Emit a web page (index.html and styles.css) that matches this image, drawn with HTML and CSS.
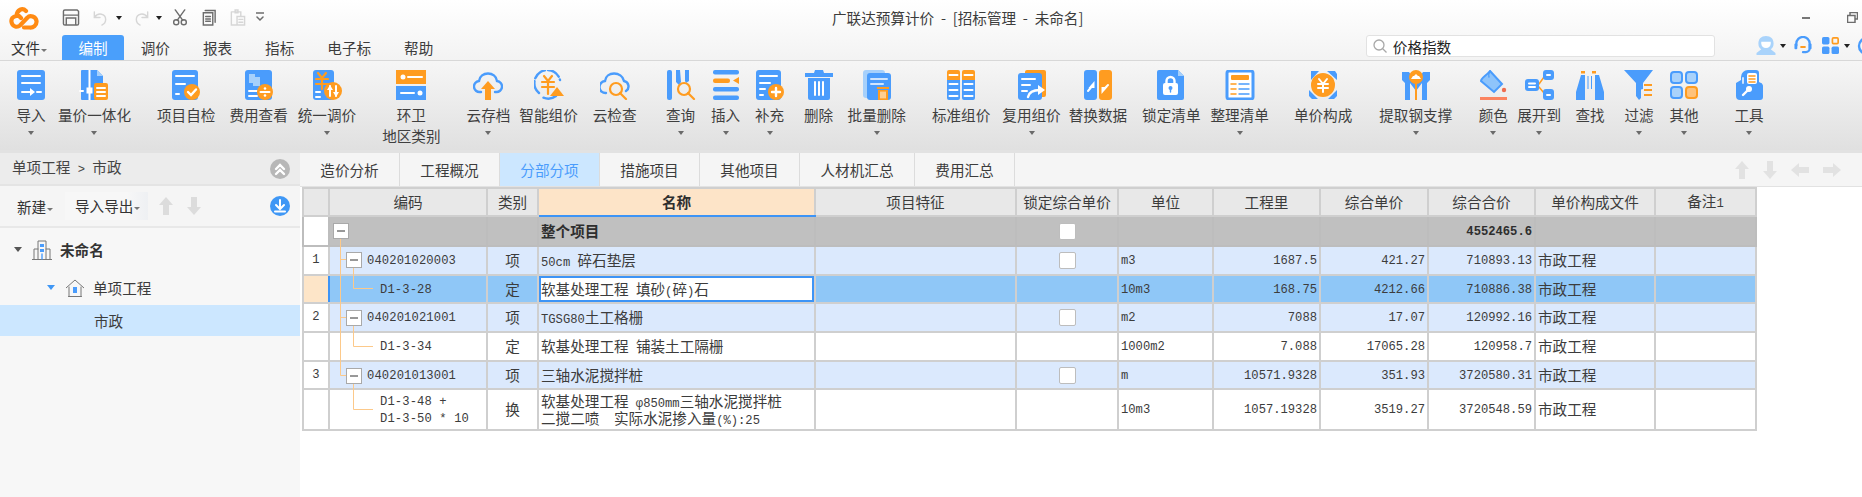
FILE: index.html
```html
<!DOCTYPE html>
<html lang="zh-CN">
<head>
<meta charset="utf-8">
<title>广联达预算计价</title>
<link rel="stylesheet" href="styles.css">
</head>
<body>
<div class="app">
  <header class="top">
    <div class="titlebar">
      <svg class="logo" viewBox="0 0 30 24"><path class="so" d="M17 5C13.500 1.500 8 3.500 7.500 10 3.500 10.500 2 13 2.500 16 3.200 20.500 8 22 11 19.500L18.500 11.500C21 8.500 27 10.500 27.500 15 28 19.500 24 22 20.500 21.500L15 21.500M12 12l-2-2"/></svg>
      <div class="quick">
        <svg class="q q-save" viewBox="0 0 18 18"><path class="sg" d="M2.500 1h13l1.500 1.500v13a1.500 1.500 0 0 1-1.500 1.500h-13A1.500 1.500 0 0 1 1 15.500v-13A1.500 1.500 0 0 1 2.500 1zM1 6.500h16M4 17v-7.500h10V17"/></svg>
        <svg class="q q-undo" viewBox="0 0 16 18"><path class="sl" d="M2 3v6h6M2 9c4-6 12-4 12 2 0 3-2 5-4 6"/></svg>
        <i class="drop d-undo"></i>
        <svg class="q q-redo" viewBox="0 0 16 18"><path class="sl" d="M14 3v6H8M14 9C10 3 2 5 2 11c0 3 2 5 4 6"/></svg>
        <i class="drop d-redo"></i>
        <svg class="q q-cut" viewBox="0 0 16 18"><path class="sg" d="M3 1l8 11M13 1L5 12"/><circle class="sg" cx="4" cy="14" r="2.700"/><circle class="sg" cx="12" cy="14" r="2.700"/></svg>
        <svg class="q q-copy" viewBox="0 0 16 18"><path class="sg" d="M4 1.500h10.500V14M2 4h10v13H2zM4.500 8h5M4.500 10.500h5M4.500 13h5"/></svg>
        <svg class="q q-paste" viewBox="0 0 17 18"><path class="sl" d="M2 3h10v5M6 1h3v3H6zM2 3v14h6M8 8h8v9H8zM10 11h4M10 14h4"/></svg>
        <svg class="q q-more" viewBox="0 0 8 12"><path class="sg" d="M0 1h8M1 5l3 3 3-3"/></svg>
      </div>
      <div class="app-title">广联达预算计价 - [招标管理 - 未命名]</div>
      <div class="win">
        <i class="win-min"></i>
        <svg class="win-res" viewBox="0 0 11 11"><path class="sg" d="M3 3V.5h7.500V7H8M.5 3.500H8V10.500H.5z"/></svg>
      </div>
    </div>
    <div class="menubar">
      <span class="file">文件<i class="caret-sm"></i></span>
      <nav class="menus">
        <span class="menu active">编制</span>
        <span class="menu">调价</span>
        <span class="menu">报表</span>
        <span class="menu">指标</span>
        <span class="menu">电子标</span>
        <span class="menu">帮助</span>
      </nav>
      <div class="search">
        <svg class="search-ic" viewBox="0 0 14 14"><circle cx="6" cy="6" r="5"/><path d="M9.500 9.500l4 4"/></svg>
        <span>价格指数</span>
      </div>
      <div class="tools">
        <svg class="t-helmet" viewBox="0 0 20 20"><path class="lb" d="M10 0c5 0 8 3 8 8 0 3-1 5-3 6l5 4v2H0v-2l5-4C3 13 2 11 2 8c0-5 3-8 8-8z"/><path class="w" d="M5 6h10v1.500c0 3-2 5-5 5s-5-2-5-5z"/></svg>
        <i class="drop"></i>
        <svg class="t-head" viewBox="0 0 18 20"><path class="sb" d="M2 10V8a7 7 0 0 1 14 0v5a4 4 0 0 1-4 4H9"/><rect class="b" x="0" y="8" width="3" height="6" rx="1"/><rect class="b" x="15" y="8" width="3" height="6" rx="1"/><rect class="o" x="6" y="10.500" width="6" height="2" rx="1"/></svg>
        <svg class="t-grid" viewBox="0 0 16 16"><rect class="b" width="7" height="7" rx="1.500"/><rect class="so2" x="9.800" y=".8" width="5.400" height="5.400" rx="1"/><rect class="b" y="9" width="7" height="7" rx="1.500"/><rect class="b" x="9" y="9" width="7" height="7" rx="1.500"/></svg>
        <i class="drop"></i>
        <svg class="t-circle" viewBox="0 0 10 20"><circle class="sb" cx="10" cy="10" r="8"/></svg>
      </div>
    </div>
  </header>

  <section class="ribbon">
    <div class="rb g16"><svg class="ri" viewBox="0 0 30 30"><rect class="b" x="1" width="28" height="30" rx="3"/><path class="sw" d="M6 6h18M6 13h18M6 22h10M21 22h4"/><path class="w" d="M14 18l5 4-5 4z"/></svg><span class="rl">导入</span><i class="caret"></i></div>
    <div class="rb g12"><svg class="ri" viewBox="0 0 30 30"><path class="b" d="M2 1a1 1 0 0 1 1-1h15l6 6v22a2 2 0 0 1-2 2H3a1 1 0 0 1-1-1z"/><path class="lb2" d="M18 0l6 6h-6z"/><path class="sw" d="M10.500 0v30M1 21h3"/><rect class="w" x="7.500" y="17.500" width="6" height="6"/><rect class="o" x="15" y="13" width="14" height="17" rx="2"/><path class="sw" d="M18 18h8M18 22h8M18 26h8"/></svg><span class="rl">量价一体化</span><i class="caret"></i></div>
    <div class="rb g26"><svg class="ri" viewBox="0 0 30 30"><rect class="b" x="1" width="26" height="30" rx="3"/><path class="sw" d="M5 6h18M5 14h9M5 24h3"/><circle class="o" cx="21" cy="22" r="8"/><path class="sw2" d="M17 22l3 3 5-5.500"/></svg><span class="rl">项目自检</span></div>
    <div class="rb g14"><svg class="ri" viewBox="0 0 30 30"><rect class="b" x="1" width="27" height="30" rx="3"/><rect class="lb2" x="5" y="4" width="6" height="9"/><rect class="lb2" x="9" y="7" width="7" height="9"/><path class="sw" d="M5 21h8M5 26h8"/><circle class="o" cx="21" cy="22" r="8"/><path class="sw" d="M16.500 22h9"/><circle class="w" cx="21" cy="18.500" r="1.300"/><circle class="w" cx="21" cy="25.500" r="1.300"/></svg><span class="rl">费用查看</span></div>
    <div class="rb g10"><svg class="ri" viewBox="0 0 30 30"><rect class="b" x="1" width="21" height="30" rx="3"/><path class="so3" d="M6 3l4 5 4-5M4 9h12M4 14h12M10 8v11"/><path class="sw" d="M4 22h4M4 27h4"/><circle class="o" cx="21" cy="21" r="9"/><path class="sw" d="M18 16v10M24 16v10"/><path class="w" d="M15 20l3-5 3 5zM21 22l3 5 3-5z"/></svg><span class="rl">统一调价</span><i class="caret"></i></div>
    <div class="rb g26"><svg class="ri ri-wide" viewBox="0 0 30 30"><rect class="o" width="30" height="14"/><rect class="b" y="16" width="30" height="14"/><circle class="w" cx="7" cy="7" r="2.500"/><path class="sw" d="M12 7h14M5 23h13"/><circle class="w" cx="24" cy="23" r="2.500"/></svg><span class="rl">环卫<br>地区类别</span></div>
    <div class="rb g26"><svg class="ri" viewBox="0 0 30 30"><path class="sb" d="M8 22H7a5.500 5.500 0 0 1-1-11c1-10 17-10 18 0a5.500 5.500 0 0 1-1 11h-1"/><path class="o" d="M15 11l7 8h-4v11h-6V19H8z"/></svg><span class="rl">云存档</span><i class="caret"></i></div>
    <div class="rb g9"><svg class="ri" viewBox="0 0 30 30"><path class="sb" stroke-dasharray="13 3" d="M5 23A13 13 0 1 1 26 10M22 26a13 13 0 0 1-14 1"/><path class="so3" d="M10 6l4 5 4-5M8 12h12M8 17h12M14 11v13"/><path class="o" d="M23 17l7 9H16z"/></svg><span class="rl">智能组价</span></div>
    <div class="rb g15"><svg class="ri" viewBox="0 0 30 30"><path class="sb" d="M6 23a5.500 5.500 0 0 1-1-12C6 1 22 1 24 11a5.500 5.500 0 0 1 2 10"/><circle class="so3" cx="16" cy="19" r="6"/><path class="so3" d="M20 23l6 6"/></svg><span class="rl">云检查</span></div>
    <div class="rb g29"><svg class="ri" viewBox="0 0 30 30"><rect class="b" x="1" width="5" height="30" rx="2"/><path class="b" d="M10 0h4l1 12-2 3-3-3zM19 0h4v11l-3 2-1-2z"/><circle class="so3" cx="18" cy="19" r="6"/><path class="so3" d="M22 23l6 6"/></svg><span class="rl">查询</span><i class="caret"></i></div>
    <div class="rb g15"><svg class="ri" viewBox="0 0 30 30"><rect class="b" x="2" width="26" height="4.500" rx="2"/><rect class="o" x="2" y="8.500" width="17" height="4.500" rx="2"/><path class="o" d="M28 7v7l-6-3.500z"/><rect class="b" x="2" y="17" width="26" height="4.500" rx="2"/><rect class="b" x="2" y="25.500" width="26" height="4.500" rx="2"/></svg><span class="rl">插入</span><i class="caret"></i></div>
    <div class="rb g14"><svg class="ri" viewBox="0 0 30 30"><rect class="b" x="1" width="25" height="30" rx="3"/><path class="sw" d="M5 6h17M5 13h10M5 19h5M5 25h3"/><circle class="o" cx="21" cy="22" r="8"/><path class="sw2" d="M17 22h8M21 18v8"/></svg><span class="rl">补充</span><i class="caret"></i></div>
    <div class="rb g19"><svg class="ri" viewBox="0 0 30 30"><path class="b" d="M11 0h8l1 3h9v4H1V3h9z"/><path class="b" d="M4 8h22v20a2 2 0 0 1-2 2H6a2 2 0 0 1-2-2z"/><path class="sw" d="M11 12v13M15 12v13M19 12v13"/></svg><span class="rl">删除</span></div>
    <div class="rb g14"><svg class="ri" viewBox="0 0 30 30"><rect class="lb2" x="1" width="22" height="28" rx="3"/><rect class="b" x="5" y="3" width="24" height="27" rx="3"/><path class="lw" d="M9 9h16M9 14h12"/><path class="o" d="M15 17h12v2h-12zM16 20h10v10H16z"/><path class="sw1" d="M19 22v6M21 22v6M23 22v6"/></svg><span class="rl">批量删除</span><i class="caret"></i></div>
    <div class="rb g26"><svg class="ri" viewBox="0 0 30 30"><path class="o" d="M3 0h9a2 2 0 0 1 2 2v8H1V2a2 2 0 0 1 2-2zM18 0h9a2 2 0 0 1 2 2v8H16V2a2 2 0 0 1 2-2z"/><path class="b" d="M1 10h13v18a2 2 0 0 1-2 2H3a2 2 0 0 1-2-2zM16 10h13v18a2 2 0 0 1-2 2h-9a2 2 0 0 1-2-2z"/><path class="sw" d="M3.500 5h8M18.500 5h8M3.500 14h8M18.500 14h8M3.500 20h8M18.500 20h8M3.500 26h8M18.500 26h8"/></svg><span class="rl">标准组价</span></div>
    <div class="rb g12"><svg class="ri" viewBox="0 0 30 30"><rect class="o" x="8" width="21" height="27" rx="2"/><rect class="b" x="1" y="3" width="24" height="27" rx="3"/><path class="sw" d="M5 9h13M5 15h8M5 21h5"/><path class="sw2" d="M11 27c1-5 6-7 12-7"/><path class="w" d="M21 15l7 5-7 5z"/></svg><span class="rl">复用组价</span><i class="caret"></i></div>
    <div class="rb g8"><svg class="ri" viewBox="0 0 30 30"><rect class="b" x="1" width="13" height="30" rx="3"/><rect class="o" x="16" width="13" height="30" rx="3"/><path class="sw" d="M5 21l5-6"/><path class="w" d="M11.500 11v7h-6z"/><path class="sw" d="M25 15l-5 5"/><path class="w" d="M18.500 24v-7h6z"/></svg><span class="rl">替换数据</span></div>
    <div class="rb g15"><svg class="ri" viewBox="0 0 30 30"><path class="b" d="M3 0h19l6 6v22a2 2 0 0 1-2 2H3a2 2 0 0 1-2-2V2a2 2 0 0 1 2-2z"/><path class="lb2" d="M22 0l6 6h-6z"/><path class="sw2" d="M10.500 13V11a4 4 0 0 1 8 0v2"/><rect class="w" x="7" y="13" width="15" height="12" rx="2"/><circle class="b" cx="14.500" cy="18" r="2"/><path class="sb1" d="M14.500 18v4"/></svg><span class="rl">锁定清单</span></div>
    <div class="rb g10"><svg class="ri" viewBox="0 0 30 30"><rect class="wb" x="2" y="1" width="26" height="28" rx="2"/><rect class="o" x="6" y="5" width="18" height="5" rx="1"/><path class="so1" d="M6 14h5M6 19h5M6 24h5"/><path class="sb1" d="M14 14h10M14 19h10M14 24h10"/></svg><span class="rl">整理清单</span><i class="caret"></i></div>
    <div class="rb g25"><svg class="ri" viewBox="0 0 30 30"><path class="b" d="M3 1h8l-8 9V4zM19 1h8l2 3v6zM1 20l9 9H4l-3-3zM29 20v6l-3 3h-6z"/><circle class="o" cx="15" cy="15" r="12"/><path class="sw" d="M11 9l4 5 4-5M10 14h10M10 18h10M15 14v8"/></svg><span class="rl">单价构成</span></div>
    <div class="rb g27"><svg class="ri" viewBox="0 0 30 30"><path class="b" d="M1 2h7l7 10 7-10h7v8l-3 3v17h-5V13l-6 8-6-8v17H4V13l-3-3z"/><rect class="o" x="14" y="12" width="2" height="18"/><circle class="o" cx="15" cy="7" r="7"/><path class="w" d="M10 9h10l-2-3h-1l-2-2-2 2h-1z"/></svg><span class="rl">提取钢支撑</span><i class="caret"></i></div>
    <div class="rb g26"><svg class="ri" viewBox="0 0 30 30"><path class="lbf" d="M12 1l12 13-8 8L3 11c0-3 5-5 9-10z"/><path class="sb1" d="M12 1c-1 2-2 3-1 6"/><circle class="red" cx="26" cy="20" r="2.200"/><rect class="red2" x="2" y="27" width="27" height="3"/></svg><span class="rl">颜色</span><i class="caret"></i></div>
    <div class="rb g9"><svg class="ri" viewBox="0 0 30 30"><path class="so1" d="M15 14l5-7M15 17l5 6"/><rect class="b" x="1" y="9" width="14" height="12" rx="3"/><path class="sw" d="M5 13.500h6M5 17h6"/><rect class="b" x="19" width="11" height="10" rx="3"/><rect class="w" x="22" y="4" width="5" height="2" rx="1"/><rect class="b" x="19" y="19" width="11" height="11" rx="3"/><rect class="w" x="22" y="24" width="5" height="2" rx="1"/></svg><span class="rl">展开到</span><i class="caret"></i></div>
    <div class="rb g14"><svg class="ri" viewBox="0 0 30 30"><rect class="o" x="6" y="1" width="4" height="2.500"/><rect class="o" x="17" y="1" width="4" height="2.500"/><path class="b" d="M6 5h4v25H1V22zM20 5h4l5 17v8h-9zM12.500 6h1v13h-1zM16 6h1v13h-1z"/></svg><span class="rl">查找</span></div>
    <div class="rb g19"><svg class="ri" viewBox="0 0 30 30"><path class="b" d="M0 0h29l-10 13v6l-2 .5V28l-2 2-3-4V13z"/><path class="so1w" d="M20 15h8M20 20h8M20 25h8"/></svg><span class="rl">过滤</span><i class="caret"></i></div>
    <div class="rb g15"><svg class="ri" viewBox="0 0 30 30"><rect class="lsq" x="2" y="2" width="11" height="11" rx="3"/><rect class="lsq" x="17" y="2" width="11" height="11" rx="3"/><rect class="lsq" x="2" y="17" width="11" height="11" rx="3"/><rect class="osq" x="17" y="17" width="11" height="11" rx="3"/></svg><span class="rl">其他</span><i class="caret"></i></div>
    <div class="rb g35"><svg class="ri" viewBox="0 0 30 30"><path class="b" d="M2 13l5-3V7a7 7 0 0 1 7-7h8a3 3 0 0 1 3 3v9l2 1c1 0 2 2 2 3v11a3 3 0 0 1-3 3H6a4 4 0 0 1-4-4z"/><path class="lw" d="M9 8v5"/><rect class="w" x="13" y="3" width="10" height="11" rx="2"/><path class="so1" d="M15 6h6M15 9h6M15 12h6"/><path class="sw2" d="M9 25l5-5"/><circle class="w" cx="15" cy="19" r="3"/></svg><span class="rl">工具</span><i class="caret"></i></div>
  </section>

  <main class="body">
    <aside class="side">
      <div class="crumb">
        <span>单项工程<span class="l"> &gt; </span>市政</span>
        <span class="round grey"><svg viewBox="0 0 20 20"><path class="sw2" d="M6 10l4-4 4 4M6 15l4-4 4 4"/></svg></span>
      </div>
      <div class="side-tools">
        <span class="st-new">新建<i class="caret-sm"></i></span>
        <span class="st-io">导入导出<i class="caret-sm"></i></span>
        <svg class="st-arrow up" viewBox="0 0 14 18"><path d="M7 0l7 8H10v10H4V8H0z"/></svg>
        <svg class="st-arrow" viewBox="0 0 14 18"><path d="M7 18l7-8H10V0H4v10H0z"/></svg>
        <span class="round blue"><svg viewBox="0 0 20 20"><path class="sw" d="M10 4v8M6 9l4 4 4-4M5 15.500h10"/></svg></span>
      </div>
      <ul class="tree">
        <li class="t1"><i class="tri"></i><svg class="bld" viewBox="0 0 20 20"><path class="sg1" d="M0 19.500h20M2 19V9h4M18 19V9h-4M6 19V1h8v18"/><rect class="b" x="8" y="4" width="4" height="3"/><rect class="b" x="8" y="9" width="4" height="3"/><path class="sb1" d="M10 14v5"/></svg><b>未命名</b></li>
        <li class="t2"><i class="tri blue-tri"></i><svg class="home" viewBox="0 0 18 18"><path class="sg1" d="M0 9l9-8 9 8M3 8v9.500h12V8"/><rect class="b" x="7" y="8" width="4" height="6"/><path class="sg1" d="M2.500 17.500h13"/></svg><span>单项工程</span></li>
        <li class="t3">市政</li>
      </ul>
    </aside>
    <section class="work">
      <div class="tabs">
        <span class="tab">造价分析</span>
        <span class="tab">工程概况</span>
        <span class="tab on">分部分项</span>
        <span class="tab">措施项目</span>
        <span class="tab">其他项目</span>
        <span class="tab wide">人材机汇总</span>
        <span class="tab">费用汇总</span>
        <div class="tab-arrows">
          <svg viewBox="0 0 14 18"><path d="M7 0l7 8H10v10H4V8H0z"/></svg>
          <svg viewBox="0 0 14 18"><path d="M7 18l7-8H10V0H4v10H0z"/></svg>
          <svg class="h" viewBox="0 0 18 14"><path d="M0 7l8-7v4h10v6H8v4z"/></svg>
          <svg class="h" viewBox="0 0 18 14"><path d="M18 7l-8-7v4H0v6h10v4z"/></svg>
        </div>
      </div>
      <div class="grid-wrap">
        <table class="grid">
          <colgroup>
            <col class="c-idx"><col class="c-code"><col class="c-type"><col class="c-name"><col class="c-feat"><col class="c-lock"><col class="c-unit"><col class="c-qty"><col class="c-price"><col class="c-total"><col class="c-file"><col class="c-note">
          </colgroup>
          <thead>
            <tr><th></th><th>编码</th><th>类别</th><th class="sel-h">名称</th><th>项目特征</th><th>锁定综合单价</th><th>单位</th><th>工程里</th><th>综合单价</th><th>综合合价</th><th>单价构成文件</th><th>备注<span class="l">1</span></th></tr>
          </thead>
          <tbody>
            <tr class="r-root"><td class="idx"></td><td></td><td></td><td class="name"><b>整个项目</b></td><td></td><td class="ctr"><i class="chk"></i></td><td></td><td></td><td></td><td class="num"><b>4552465.6</b></td><td></td><td></td></tr>
            <tr class="r-item"><td class="idx l">1</td><td class="code item l">040201020003</td><td class="ctr">项</td><td class="name"><span class="l">50cm </span>碎石垫层</td><td></td><td class="ctr"><i class="chk"></i></td><td class="l unit">m3</td><td class="num">1687.5</td><td class="num">421.27</td><td class="num">710893.13</td><td class="name">市政工程</td><td></td></tr>
            <tr class="r-sel"><td class="idx sel-idx"></td><td class="code sub l">D1-3-28</td><td class="ctr">定</td><td class="name editing">软基处理工程<span class="l"> </span>填砂<span class="l">(</span>碎<span class="l">)</span>石</td><td></td><td></td><td class="l unit">10m3</td><td class="num">168.75</td><td class="num">4212.66</td><td class="num">710886.38</td><td class="name">市政工程</td><td></td></tr>
            <tr class="r-item"><td class="idx l">2</td><td class="code item l">040201021001</td><td class="ctr">项</td><td class="name"><span class="l">TGSG80</span>土工格栅</td><td></td><td class="ctr"><i class="chk"></i></td><td class="l unit">m2</td><td class="num">7088</td><td class="num">17.07</td><td class="num">120992.16</td><td class="name">市政工程</td><td></td></tr>
            <tr class="r-def"><td class="idx"></td><td class="code sub l">D1-3-34</td><td class="ctr">定</td><td class="name">软基处理工程<span class="l"> </span>铺装土工隔栅</td><td></td><td></td><td class="l unit">1000m2</td><td class="num">7.088</td><td class="num">17065.28</td><td class="num">120958.7</td><td class="name">市政工程</td><td></td></tr>
            <tr class="r-item r-short"><td class="idx l">3</td><td class="code item l">040201013001</td><td class="ctr">项</td><td class="name">三轴水泥搅拌桩</td><td></td><td class="ctr"><i class="chk"></i></td><td class="l unit">m</td><td class="num">10571.9328</td><td class="num">351.93</td><td class="num">3720580.31</td><td class="name">市政工程</td><td></td></tr>
            <tr class="r-tall"><td class="idx"></td><td class="code sub l">D1-3-48 +<br>D1-3-50 * 10</td><td class="ctr">换</td><td class="name">软基处理工程<span class="l"> φ850mm</span>三轴水泥搅拌桩<br>二搅二喷<span class="l">  </span>实际水泥掺入量<span class="l">(%):25</span></td><td></td><td></td><td class="l unit">10m3</td><td class="num">1057.19328</td><td class="num">3519.27</td><td class="num">3720548.59</td><td class="name">市政工程</td><td></td></tr>
          </tbody>
        </table>
        <svg class="tree-lines" viewBox="0 0 200 250">
          <path class="ln" d="M37.500 51V188.500H43M37.500 72.500H43M37.500 130.500H43"/>
          <path class="ln" d="M50.500 80V101.500H70M50.500 138V159.500H70M50.500 196V222.500H70"/>
          <g class="tb"><rect x="30.500" y="36.500" width="15" height="15"/><rect x="43.500" y="65.500" width="15" height="15"/><rect x="43.500" y="123.500" width="15" height="15"/><rect x="43.500" y="181.500" width="15" height="15"/></g>
          <path class="tm" d="M34 44h8M47 73h8M47 131h8M47 189h8"/>
        </svg>
      </div>
    </section>
  </main>
</div>
</body>
</html>
```

FILE: styles.css
```css
* { box-sizing: border-box; }
html, body { margin: 0; height: 100%; overflow: hidden; background: #fff; }
body { font: 14.6px/21px "Noto Sans CJK SC", "Liberation Sans", sans-serif; color: #3c3c3c; }
i { display: block; }
.app { display: flex; flex-direction: column; height: 497px; }

/* svg paint */
.b { fill: #4a9cfc; } .o { fill: #ff9c20; } .w { fill: #fff; }
.lb { fill: #a9d3fb; } .lb2 { fill: #a6d0fb; }
.sw, .sw1, .sw2, .sb, .sb1, .so, .so1, .so1w, .so2, .so3, .sg, .sg1, .sl, .lw { fill: none; stroke-linecap: round; }
.sw { stroke: #fff; stroke-width: 2; } .sw1 { stroke: #fff; stroke-width: 1; } .sw2 { stroke: #fff; stroke-width: 2.400; }
.sb { stroke: #4a9cfc; stroke-width: 2.400; } .sb1 { stroke: #4a9cfc; stroke-width: 1.400; }
.so { stroke: #ff8a12; stroke-width: 4.200; } .so1 { stroke: #ff9c20; stroke-width: 1.500; } .so1w { stroke: #ff9c20; stroke-width: 2; stroke-linecap: butt; }
.so2 { stroke: #ff9c20; stroke-width: 1.600; } .so3 { stroke: #ff9c20; stroke-width: 2.200; }
.sg { stroke: #6d6d6d; stroke-width: 1.500; } .sg1 { stroke: #777; stroke-width: 1; }
.sl { stroke: #d6d6d6; stroke-width: 1.500; } .lw { stroke: #cfe4fd; stroke-width: 2; }
.wb { fill: #fff; stroke: #4a9cfc; stroke-width: 3; }
.lbf { fill: #8ec4fb; stroke: #4a9cfc; stroke-width: 2; }
.red { fill: #ee6d4f; } .red2 { fill: #fb8460; }
.lsq { fill: #a9d2fb; stroke: #4a9cfc; stroke-width: 2; } .osq { fill: #ffc27a; stroke: #ff9c20; stroke-width: 2; }

/* top */
.top { height: 61px; flex: none; background: linear-gradient(#fff, #f3f3f3); border-bottom: 1px solid #d8d8d8; display: flex; flex-direction: column; }
.titlebar { height: 35px; flex: none; display: flex; align-items: center; }
.logo { width: 30px; height: 24px; margin-left: 9px; flex: none; }
.quick { display: flex; align-items: center; margin-left: 23px; }
.q { height: 17px; }
.q-save { width: 18px; }
.q-undo { width: 16px; margin-left: 12px; }
.d-undo { margin-left: 8px; }
.q-redo { width: 16px; margin-left: 12px; }
.d-redo { margin-left: 6px; }
.q-cut { width: 16px; margin-left: 10px; }
.q-copy { width: 16px; margin-left: 13px; }
.q-paste { width: 17px; margin-left: 12px; }
.q-more { width: 8px; height: 12px; margin-left: 10px; }
.drop { width: 0; height: 0; border: 3.500px solid transparent; border-top: 4px solid #222; border-bottom: 0; }
.app-title { margin-left: 568px; color: #3c3c3c; white-space: pre; word-spacing: 3.500px; }
.win { margin-left: auto; display: flex; align-items: center; margin-right: 4px; }
.win-min { width: 8px; height: 2px; background: #777; margin-right: 37px; }
.win-res { width: 11px; height: 11px; }
.menubar { height: 25px; flex: none; display: flex; align-items: stretch; }
.file { margin-left: 11px; width: 51px; flex: none; color: #333; line-height: 26px; }
.caret-sm { display: inline-block; width: 0; height: 0; border: 3px solid transparent; border-top: 3px solid #777; border-bottom: 0; vertical-align: 2px; margin-left: 1px; }
.menus { display: flex; flex: none; }
.menu { flex: none; padding: 0 16.500px; line-height: 26px; color: #3c3c3c; white-space: nowrap; }
.menu.active { background: #4a9ffb; color: #fff; border-radius: 3px 3px 0 0; }
.search { flex: none; width: 349px; height: 22px; margin-left: 916px; background: #fff; border: 1px solid #e2e2e2; border-radius: 3px; display: flex; align-items: center; color: #222; padding-left: 6px; }
.search-ic { width: 14px; height: 14px; margin-right: 6px; fill: none; stroke: #a8a8a8; stroke-width: 1.300; }
.tools { display: flex; flex: none; align-items: center; margin-left: 41px; height: 21px; }
.t-helmet { width: 20px; height: 19px; }
.tools .drop { margin-left: 4px; }
.t-head { width: 18px; height: 19px; margin-left: 8px; }
.t-grid { width: 17px; height: 17px; margin-left: 10px; }
.t-circle { width: 10px; height: 20px; margin-left: 7px; flex: none; }
.t-grid + .drop { margin-left: 5px; }

/* ribbon */
.ribbon { height: 89px; flex: none; display: flex; padding-top: 9px; background: linear-gradient(#f6f6f6, #e0e0e0); overflow: hidden; }
.rb { flex: none; display: flex; flex-direction: column; align-items: center; color: #3f3f3f; }
.ri { width: 30px; height: 30px; flex: none; display: block; }
.rl { margin-top: 4px; line-height: 21px; text-align: center; white-space: nowrap; }
.caret { width: 0; height: 0; border: 3.500px solid transparent; border-top: 4px solid #6a6a6a; border-bottom: 0; margin-top: 6px; }
.g8 { margin-left: 8px; } .g9 { margin-left: 9px; } .g10 { margin-left: 10px; } .g12 { margin-left: 12px; }
.g14 { margin-left: 14px; } .g15 { margin-left: 15px; } .g16 { margin-left: 16px; }
.g19 { margin-left: 19px; } .g25 { margin-left: 25px; } .g26 { margin-left: 26px; }
.g27 { margin-left: 27px; } .g29 { margin-left: 29px; } .g35 { margin-left: 35px; }

/* body */
.body { flex: 1; display: flex; border-top: 3px solid #e2e2e2; min-height: 0; }
.side { width: 300px; flex: none; background: #f7f7f7; }
.crumb { height: 33px; background: #ececec; display: flex; align-items: center; justify-content: space-between; padding: 0 10px 0 12px; color: #444; border-bottom: 2px solid #e4e4e4; }
.round { width: 20px; height: 20px; border-radius: 50%; display: block; }
.round svg { display: block; width: 20px; height: 20px; }
.grey { background: #b7b7b7; }
.blue { background: #3f97f5; }
.side-tools { height: 42px; display: flex; align-items: center; background: #f5f5f5; border-bottom: 2px solid #e8e8e8; padding-right: 10px; color: #333; }
.st-new { margin-left: 17px; width: 48px; }
.st-io { width: 83px; height: 28px; padding-left: 10px; line-height: 28px; background: linear-gradient(90deg, #f7f7f7 75%, #eef0f3); }
.st-arrow { width: 14px; height: 18px; fill: #dcdcdc; margin-left: 14px; }
.st-arrow.up { margin-left: 11px; }
.side-tools .round { margin-left: auto; }
.tree { margin: 0; padding: 1px 0 0; list-style: none; }
.tree li { display: flex; align-items: center; }
.t1 { height: 41px; padding-left: 14px; }
.t2 { height: 35px; padding-left: 47px; }
.t3 { height: 31px; padding-left: 94px; background: #cce7ff; }
.tri { width: 0; height: 0; border: 4.500px solid transparent; border-top: 5px solid #555; border-bottom: 0; }
.blue-tri { border-top-color: #3f97f5; }
.bld { width: 20px; height: 20px; margin: 0 8px 0 10px; }
.home { width: 18px; height: 18px; margin: 0 9px 0 11px; }
.t1 b { color: #333; font-weight: 700; }

.work { flex: 1; min-width: 0; background: #fff; }
.tabs { height: 34px; display: flex; background: #f5f5f5; border-bottom: 1px solid #e2e2e2; }
.tab { width: 100px; text-align: center; line-height: 33px; border-right: 1px solid #dcdcdc; color: #3c3c3c; }
.tab.wide { width: 115px; }
.tab.on { background: #cce7ff; color: #4a9cfc; }
.tab-arrows { margin-left: auto; display: flex; align-items: center; gap: 14px; padding-right: 21px; }
.tab-arrows svg { width: 14px; height: 18px; fill: #e2e2e2; }
.tab-arrows svg.h { width: 18px; height: 14px; }
.grid-wrap { position: relative; margin-left: 2px; width: 1453px; }
.grid { border-collapse: collapse; table-layout: fixed; width: 1453px; color: #3c3c3c; }
.c-idx { width: 26px; } .c-code { width: 158px; } .c-type { width: 51px; } .c-name { width: 277px; } .c-feat { width: 201px; } .c-lock { width: 102px; }
.c-unit { width: 95px; } .c-qty { width: 107px; } .c-price { width: 108px; } .c-total { width: 107px; } .c-file { width: 120px; } .c-note { width: 101px; }
.grid th, .grid td { border: 2px solid #cfcfcf; padding: 0; overflow: hidden; white-space: nowrap; }
.grid th { height: 28px; background: #e8e8e8; font-weight: 400; text-align: center; line-height: 20px; }
.grid th.sel-h { background: #fde4c8; font-weight: 700; border-bottom: 2px solid #3d94f6; color: #2f2f2f; }
.l { font-family: "Liberation Mono", monospace; font-size: 12.170px; white-space: pre; }
.name .l { line-height: 10px; }
.grid td { height: 29px; line-height: 17px; }
.r-root td { height: 30px; background: #c0c0c0; border-color: #bdbdbd; }
.r-root b { color: #2e2e2e; }
.r-item td { background: #dbe9fd; }
.r-short td, .r-sel td { height: 28px; }
.r-sel td { background: #8fc7f7; }
.r-def td, .r-tall td { background: #fff; }
.r-tall td { height: 41px; }
.grid td.idx { background: #fff; text-align: center; }
.grid td.sel-idx { background: #fde5c8; border-right: 2px solid #3d94f6; }
.ctr { text-align: center; padding-bottom: 2px !important; }
.name { padding: 0 0 2px 2px !important; }
.unit { padding: 2px 0 0 2px !important; }
.num { text-align: right; padding: 2px 2px 0 0 !important; font-family: "Liberation Mono", monospace; font-size: 12.170px; }
.code { letter-spacing: .12px; }
.code.item { padding: 2px 0 0 37px !important; }
.code.sub { padding: 2px 0 0 50px !important; }
.grid td.editing { background: #fff; box-shadow: inset 0 0 0 2px #3d94f6; }
.chk { display: inline-block; width: 17px; height: 17px; background: #fff; border: 1px solid #bdbdbd; border-radius: 2px; vertical-align: middle; }
.tree-lines { position: absolute; left: 1px; top: 0; width: 200px; height: 250px; pointer-events: none; }
.ln { fill: none; stroke: #fcc98a; stroke-width: 1; }
.tb rect { fill: #fff; stroke: #a9a9a9; stroke-width: 1; }
.tm { stroke: #333; stroke-width: 1; fill: none; }
```
